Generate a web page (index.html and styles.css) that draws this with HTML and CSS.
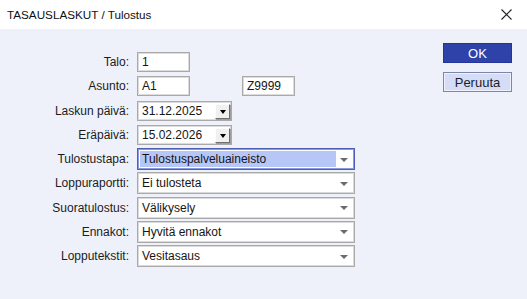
FILE: index.html
```html
<!DOCTYPE html>
<html lang="fi">
<head>
    <meta charset="UTF-8">
    <title>TASAUSLASKUT / Tulostus</title>
    <link rel="stylesheet" href="styles.css">
</head>
<body>
    <div class="titlebar">
        <span class="title">TASAUSLASKUT / Tulostus</span>
        <svg class="close" width="11" height="11" viewBox="0 0 11 11">
            <path d="M0.5 0.5 L10.5 10.5 M10.5 0.5 L0.5 10.5" stroke="#1f1f1f" stroke-width="1.1" fill="none"/>
        </svg>
    </div>

    <div class="content">
        <div class="form">
            <label>Talo:</label>
            <div><div class="input small">1</div></div>

            <label>Asunto:</label>
            <div class="pair">
                <div class="input small">A1</div>
                <div class="input small">Z9999</div>
            </div>

            <label>Laskun päivä:</label>
            <div>
                <div class="input date">31.12.2025<span class="drop-btn"></span></div>
            </div>

            <label>Eräpäivä:</label>
            <div>
                <div class="input date">15.02.2026<span class="drop-btn"></span></div>
            </div>

            <label>Tulostustapa:</label>
            <div class="select active"><span class="value">Tulostuspalveluaineisto</span><span class="arrow"></span></div>

            <label>Loppuraportti:</label>
            <div class="select"><span class="value">Ei tulosteta</span><span class="arrow"></span></div>

            <label>Suoratulostus:</label>
            <div class="select"><span class="value">Välikysely</span><span class="arrow"></span></div>

            <label>Ennakot:</label>
            <div class="select"><span class="value">Hyvitä ennakot</span><span class="arrow"></span></div>

            <label>Lopputekstit:</label>
            <div class="select"><span class="value">Vesitasaus</span><span class="arrow"></span></div>
        </div>

        <div class="buttons">
            <button class="btn ok">OK</button>
            <button class="btn cancel">Peruuta</button>
        </div>
    </div>
</body>
</html>
```

FILE: styles.css
```css
body {
    margin: 0;
    font-family: "Liberation Sans", Arial, sans-serif;
    font-size: 12px;
    color: #1c1c1c;
    background-color: #eef1f9;
    height: 299px;
    overflow: hidden;
}

.titlebar {
    height: 29px;
    background-color: #ffffff;
    display: flex;
    align-items: center;
    justify-content: space-between;
    padding: 0 15px 0 7px;
}
.title {
    font-size: 11.7px;
    color: #111;
    padding-bottom: 1px;
}
.close {
    margin-bottom: 1px;
}

.content {
    display: flex;
    padding: 14px 15px 0 38px;
}

.form {
    display: grid;
    grid-template-columns: 91px 218px;
    grid-auto-rows: 24.25px;
    column-gap: 8px;
    align-items: center;
    padding-top: 7px;
}
.form label {
    text-align: right;
    white-space: nowrap;
}

.input {
    box-sizing: border-box;
    height: 20px;
    background-color: #fff;
    border: 1px solid #a9a9a9;
    box-shadow: inset 0 0 0 1px #dcdcdc;
    padding: 2px 0 0 4px;
    line-height: 15px;
    color: #151515;
}
.small {
    width: 53px;
}
.pair {
    display: flex;
    gap: 52px;
}
.date {
    width: 95px;
    display: flex;
    justify-content: space-between;
    padding-right: 1px;
}
.drop-btn {
    box-sizing: border-box;
    width: 15px;
    height: 15px;
    background-color: #f0f0f0;
    border-top: 1px solid #fdfdfd;
    border-left: 1px solid #fdfdfd;
    border-right: 1px solid #6f6f6f;
    border-bottom: 1px solid #6f6f6f;
    box-shadow: 1px 1px 0 #a0a0a0;
    display: flex;
    align-items: center;
    justify-content: center;
}
.drop-btn::after {
    content: "";
    border-left: 3.5px solid transparent;
    border-right: 3.5px solid transparent;
    border-top: 4px solid #000;
    margin-top: 1px;
}

.select {
    box-sizing: border-box;
    width: 218px;
    height: 22px;
    background-color: #fff;
    border: 1px solid #a9a9a9;
    box-shadow: inset 0 0 0 1px #dadada;
    display: flex;
    padding: 2px;
}
.select .value {
    flex: 1;
    padding-left: 2px;
    line-height: 16px;
    color: #151515;
}
.select .arrow {
    width: 16px;
    display: flex;
    align-items: center;
    justify-content: center;
}
.select .arrow::after {
    content: "";
    border-left: 4px solid transparent;
    border-right: 4px solid transparent;
    border-top: 4px solid #6b6b6b;
    margin-top: 1px;
}
.select.active {
    border-color: #4d5fb6;
    box-shadow: inset 0 0 0 1px #8a9ae0;
}
.select.active .value {
    background-color: #b6c6f7;
}

.buttons {
    margin-left: auto;
    display: flex;
    flex-direction: column;
    gap: 9px;
}
.btn {
    box-sizing: border-box;
    width: 69px;
    height: 20px;
    font-family: "Liberation Sans", Arial, sans-serif;
    font-size: 13px;
    padding: 0;
    cursor: pointer;
}
.ok {
    background-color: #2e42a9;
    border: 1px solid #23349a;
    color: #fff;
}
.cancel {
    background-color: #d4dcf6;
    border: 1px solid #7c86a8;
    box-shadow: inset 0 0 0 1px #eef1fb;
    color: #1c1c2c;
}
```
